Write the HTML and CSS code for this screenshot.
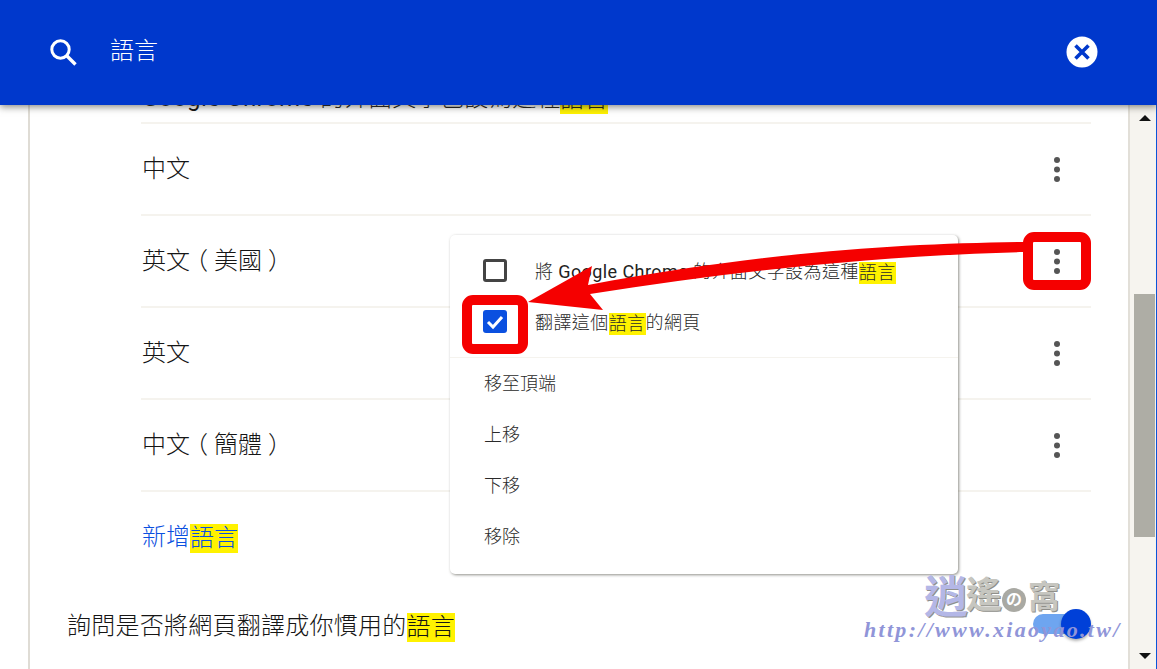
FILE: index.html
```html
<!DOCTYPE html>
<html lang="zh-Hant">
<head>
<meta charset="utf-8">
<title>語言</title>
<link rel="stylesheet" href="styles.css">
</head>
<body>
<div class="page">
  <header class="topbar">
    <svg class="search-icon" viewBox="0 0 28 28"><circle cx="11.5" cy="11.5" r="8.7" fill="none" stroke="#fff" stroke-width="3"/><path d="M18 18 L26.5 26.5" stroke="#fff" stroke-width="3.4" fill="none"/></svg>
    <span class="query">語言</span>
    <svg class="clear-icon" viewBox="0 0 32 32"><circle cx="16" cy="16" r="15.5" fill="#fff"/><path d="M9.5 9.5 L22.5 22.5 M22.5 9.5 L9.5 22.5" stroke="#0038cc" stroke-width="3.6" fill="none"/></svg>
  </header>
  <div class="view">
    <main class="content">
      <section class="card">
        <div class="list">
          <div class="row row-clipped"><span class="label"><span class="latin">Google Chrome </span>的介面文字已設為這種<mark class="hl">語言</mark></span></div>
          <div class="row"><span class="label">中文</span><svg class="dots" viewBox="0 0 24 24"><circle cx="12" cy="3" r="3"/><circle cx="12" cy="12.5" r="3"/><circle cx="12" cy="22" r="3"/></svg></div>
          <div class="row"><span class="label">英文<span class="paren">（</span>美國<span class="paren">）</span></span><svg class="dots" viewBox="0 0 24 24"><circle cx="12" cy="3" r="3"/><circle cx="12" cy="12.5" r="3"/><circle cx="12" cy="22" r="3"/></svg></div>
          <div class="row"><span class="label">英文</span><svg class="dots" viewBox="0 0 24 24"><circle cx="12" cy="3" r="3"/><circle cx="12" cy="12.5" r="3"/><circle cx="12" cy="22" r="3"/></svg></div>
          <div class="row"><span class="label">中文<span class="paren">（</span>簡體<span class="paren">）</span></span><svg class="dots" viewBox="0 0 24 24"><circle cx="12" cy="3" r="3"/><circle cx="12" cy="12.5" r="3"/><circle cx="12" cy="22" r="3"/></svg></div>
          <div class="add-row"><a class="link">新增<mark class="hl">語言</mark></a></div>
        </div>
        <div class="ask-row">
          <span class="ask-text">詢問是否將網頁翻譯成你慣用的<mark class="hl">語言</mark></span>
          <span class="toggle"><span class="knob"></span></span>
        </div>
      </section>
    </main>
    <aside class="scrollbar">
      <span class="arrow-up"></span>
      <span class="thumb"></span>
      <span class="arrow-down"></span>
    </aside>
  </div>

  <div class="menu">
    <div class="menu-check"><span class="box"></span><span>將 <span class="latin-small">Google Chrome </span>的介面文字設為這種<mark class="hl hl-small">語言</mark></span></div>
    <div class="menu-check"><span class="box box-on"><svg viewBox="0 0 24 23"><path d="M5 12 L10 17 L19 7" fill="none" stroke="#fff" stroke-width="3"/></svg></span><span>翻譯這個<mark class="hl hl-small">語言</mark>的網頁</span></div>
    <div class="menu-sep"></div>
    <div class="menu-item">移至頂端</div>
    <div class="menu-item">上移</div>
    <div class="menu-item">下移</div>
    <div class="menu-item">移除</div>
  </div>

  <svg class="annotation" viewBox="0 0 1157 669">
    <path d="M1023 242 C900 244 770 251 588 285 L592 266 L528 302 L603 310 L590 294 C740 270 880 256 1023 252 Z" fill="#f50000"/>
    <rect x="1028" y="237" width="58" height="48" rx="6" fill="none" stroke="#f50000" stroke-width="10"/>
    <rect x="467" y="300" width="56" height="49" rx="6" fill="none" stroke="#f50000" stroke-width="10"/>
  </svg>

  <div class="watermark">
    <div class="wm-logo"><span class="wm-a">逍</span><span class="wm-b">遙</span><span class="wm-c">の</span><span class="wm-d">窩</span></div>
    <div class="wm-url">http://www.xiaoyao.tw/</div>
  </div>
</div>
</body>
</html>
```
FILE: styles.css
```css
* { box-sizing: border-box; }
html, body { margin: 0; padding: 0; }
body {
  background: #fff;
  color: #151515;
  font-family: Roboto, "Noto Sans CJK TC", "Noto Sans", sans-serif;
  font-weight: 300;
  font-size: 24px;
  text-spacing-trim: space-all;
}
.page {
  position: relative;
  width: 1157px;
  height: 669px;
  overflow: hidden;
}
.topbar {
  position: relative;
  z-index: 2;
  display: flex;
  align-items: center;
  height: 105px;
  padding: 0 59px 0 49px;
  background: #0038cc;
  color: #fff;
  box-shadow: 0 2px 7px rgba(60, 60, 50, .6);
}
.search-icon { width: 28px; height: 28px; margin-bottom: 1px; }
.query { margin-left: 33px; line-height: 29px; margin-bottom: 2px; }
.clear-icon { width: 32px; height: 32px; margin-left: auto; margin-bottom: 1px; }

.view { display: flex; height: 564px; }
.content { flex: 1; min-width: 0; overflow: hidden; }
.card {
  display: flow-root;
  margin-left: 28px;
  height: 100%;
  border-left: 2px solid #dfdcd5;
}
.list { width: 950px; margin: -21px 0 0 111px; }
.row {
  display: flex;
  align-items: center;
  justify-content: space-between;
  height: 92px;
  padding: 0 22px 6px 1px;
  border-bottom: 2px solid #f5f3ee;
}
.row-clipped {
  height: 40px;
  align-items: flex-end;
  padding-bottom: 8px;
}
.label { white-space: nowrap; }
.latin { font-weight: 400; letter-spacing: .45px; color: #111; }
.paren { font-feature-settings: "halt"; padding: 0 6px; }
.dots { width: 24px; height: 26px; fill: #555; overflow: visible; margin-top: 6px; }
.hl {
  display: inline-block;
  background: #fff200;
  color: inherit;
  line-height: 29px;
  vertical-align: middle;
}
.hl-small { line-height: 22px; }
.add-row {
  display: flex;
  align-items: center;
  height: 92px;
  padding: 0 0 6px 1px;
}
.link { color: #0b50e0; }
.ask-row {
  display: flex;
  align-items: center;
  justify-content: space-between;
  width: 1017px;
  margin-left: 38px;
  height: 84px;
  padding-bottom: 4px;
}
.ask-text { letter-spacing: .25px; margin-left: -1px; }
.toggle {
  position: relative;
  width: 52px;
  height: 20px;
  border-radius: 10px;
  background: #6ea5f0;
}
.knob {
  position: absolute;
  top: -5px;
  right: -6px;
  width: 30px;
  height: 30px;
  border-radius: 50%;
  background: #0040d8;
  box-shadow: 0 2px 3px rgba(0, 0, 0, .3);
}

.scrollbar {
  display: flex;
  flex-direction: column;
  flex: none;
  width: 29px;
  background: #f6f4ef;
  border-left: 2px solid #e2dfd8;
  border-right: 1px solid #0a55d8;
  padding: 10px 0 0 4px;
}
.arrow-up, .arrow-down {
  flex: none;
  width: 0;
  height: 0;
  margin-left: 5px;
  border-left: 6px solid transparent;
  border-right: 6px solid transparent;
}
.arrow-up { border-bottom: 6px solid #111; }
.arrow-down { border-top: 6px solid #111; margin-top: 116px; }
.thumb {
  flex: none;
  width: 21px;
  height: 243px;
  margin-top: 173px;
  background: #aeada5;
}

.menu {
  position: absolute;
  z-index: 1;
  left: 450px;
  top: 235px;
  width: 508px;
  height: 339px;
  padding: 10px 0 12px;
  background: #fff;
  border-radius: 5px;
  color: #2a2a2a;
  font-size: 18px;
  box-shadow: 1px 1px 3px rgba(70, 70, 60, .6);
}
.menu-check {
  display: flex;
  align-items: center;
  gap: 28px;
  height: 51px;
  padding-left: 33px;
  letter-spacing: .42px;
}
.latin-small { font-weight: 400; color: #222; }
.box {
  flex: none;
  width: 24px;
  height: 23px;
  border: 3px solid #444;
  border-radius: 3px;
}
.box-on { border: 0; background: #0b50e0; }
.box-on svg { display: block; width: 24px; height: 23px; }
.menu-sep { height: 1px; margin-top: 10px; background: #f5f3ee; }
.menu-item {
  display: flex;
  align-items: center;
  height: 51px;
  padding: 0 0 4px 34px;
}

.annotation {
  position: absolute;
  z-index: 3;
  left: 0;
  top: 0;
  width: 1157px;
  height: 669px;
  pointer-events: none;
}

.watermark {
  position: absolute;
  z-index: 4;
  left: 864px;
  top: 572px;
  width: 260px;
  pointer-events: none;
}
.wm-logo {
  display: flex;
  align-items: flex-end;
  margin-left: 60px;
  height: 48px;
  font-weight: 700;
  line-height: 1;
  text-shadow: 1px 1px 0 #8f8f8a;
}
.wm-a { color: #b4b7e6; font-size: 44px; }
.wm-b { color: #c6c6c0; font-size: 36px; margin-left: -2px; margin-bottom: 6px; }
.wm-c {
  width: 24px;
  height: 24px;
  margin: 0 2px 8px 0;
  border-radius: 50%;
  background: #a9a9a3;
  color: #fff;
  font-size: 16px;
  line-height: 24px;
  text-align: center;
  text-shadow: none;
}
.wm-d { color: #c6c6c0; font-size: 32px; margin-bottom: 7px; }
.wm-url {
  font-family: "Liberation Serif", serif;
  font-style: italic;
  font-weight: 700;
  font-size: 22px;
  line-height: 20px;
  letter-spacing: 2.3px;
  color: #9095d8;
  white-space: nowrap;
}
```
